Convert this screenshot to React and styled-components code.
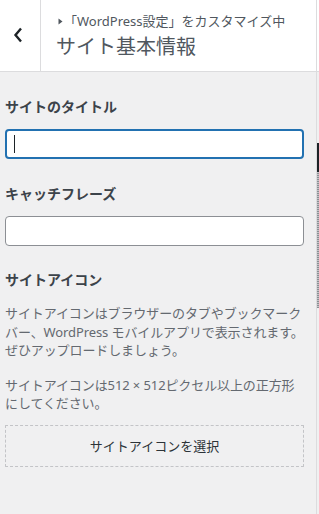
import React from "react";
import styled, { createGlobalStyle } from "styled-components";

const Global = createGlobalStyle`
  html, body { margin: 0; padding: 0; background: #f0f0f1; }
  body { font-family: "Noto Sans", "Noto Sans CJK JP", sans-serif; }
  * { box-sizing: border-box; }
`;

const Frame = styled.div`
  display: flex;
  width: 319px;
  height: 514px;
  overflow: hidden;
  background: #f0f0f1;
`;

const Panel = styled.div`
  width: 317px;
  flex: none;
  border-right: 1px solid #dcdcde;
  display: flex;
  flex-direction: column;
`;

const Header = styled.header`
  display: flex;
  height: 72px;
  background: #fff;
  border-bottom: 1px solid #dcdcde;
`;

const BackButton = styled.button`
  width: 41px;
  flex: none;
  border: 0;
  border-right: 1px solid #dcdcde;
  background: #fff;
  padding: 0;
  margin: 0;
  display: flex;
  align-items: center;
  justify-content: center;
  color: #1d2327;
  cursor: pointer;
  svg { margin-left: -5px; margin-top: -1px; }
`;

const TitleBlock = styled.div`
  display: flex;
  flex-direction: column;
  padding: 11px 0 0 15px;
`;

const Action = styled.div`
  display: flex;
  align-items: center;
  font-size: 13px;
  line-height: 20px;
  color: #50575e;
  white-space: nowrap;
  svg { margin: 0 1px 0 2px; }
`;

const SectionTitle = styled.h3`
  margin: 2px 0 0;
  font-size: 20px;
  line-height: 28px;
  font-weight: 400;
  color: #50575e;
`;

const Body = styled.div`
  display: flex;
  flex-direction: column;
  padding: 25px 12px 0 5px;
`;

const Field = styled.div`
  display: flex;
  flex-direction: column;
  margin-bottom: ${(p) => p.$mb || 0}px;
`;

const Label = styled.label`
  font-size: 14px;
  line-height: 20px;
  font-weight: 600;
  color: #3c434a;
  margin-bottom: ${(p) => p.$mb || 12}px;
`;

const InputWrap = styled.div`
  position: relative;
  height: 30px;
`;

const TextInput = styled.input`
  width: 100%;
  height: 30px;
  margin: 0;
  padding: 0 8px;
  font-family: inherit;
  font-size: 14px;
  background: #fff;
  border-radius: 4px;
  outline: none;
  caret-color: transparent;
  border: ${(p) => (p.$focused ? "2px solid #2271b1" : "1px solid #8c8f94")};
`;

const Caret = styled.span`
  position: absolute;
  left: 9px;
  top: 6px;
  width: 1px;
  height: 18px;
  background: #1d2327;
`;

const Desc = styled.p`
  margin: 0 0 ${(p) => p.$mb || 0}px;
  font-size: 13px;
  line-height: 18.5px;
  color: #646970;
  letter-spacing: -0.1px;
`;

const SelectButton = styled.button`
  width: 100%;
  height: 42px;
  margin: 0;
  border: 1px dashed #c3c4c7;
  border-radius: 1px;
  background: transparent;
  font-family: inherit;
  font-size: 13px;
  color: #2c3338;
  cursor: pointer;
`;

const Side = styled.div`
  width: 2px;
  flex: none;
  display: flex;
  flex-direction: column;
`;

const SideTop = styled.div`
  height: 72px;
  background: #fff;
  border-bottom: 1px solid #dcdcde;
`;

const SideGap = styled.div`
  height: 71px;
`;

const Thumb = styled.div`
  height: 29px;
  background: #1d2327;
`;

const Track = styled.div`
  height: 136px;
  background-color: #a7aaad;
  background-image: repeating-linear-gradient(0deg, #8c8f94 0 1px, #c3c4c7 1px 2px);
`;

function Chevron() {
  return (
    <svg width="10" height="16" viewBox="0 0 10 16" aria-hidden="true">
      <path d="M8 1.5 L2.5 8 L8 14.5" fill="none" stroke="currentColor" strokeWidth="2.4" />
    </svg>
  );
}

function Tri() {
  return (
    <svg width="5" height="7" viewBox="0 0 5 7" aria-hidden="true">
      <path d="M0.5 0.5 L4.5 3.5 L0.5 6.5 Z" fill="#50575e" />
    </svg>
  );
}

export default function App() {
  return (
    <>
      <Global />
      <Frame>
        <Panel>
          <Header>
            <BackButton aria-label="戻る">
              <Chevron />
            </BackButton>
            <TitleBlock>
              <Action>
                <Tri />
                「WordPress設定」をカスタマイズ中
              </Action>
              <SectionTitle>サイト基本情報</SectionTitle>
            </TitleBlock>
          </Header>
          <Body>
            <Field $mb={25}>
              <Label>サイトのタイトル</Label>
              <InputWrap>
                <TextInput $focused defaultValue="" />
                <Caret />
              </InputWrap>
            </Field>
            <Field $mb={24}>
              <Label>キャッチフレーズ</Label>
              <InputWrap>
                <TextInput defaultValue="" />
              </InputWrap>
            </Field>
            <Field>
              <Label $mb={14}>サイトアイコン</Label>
              <Desc $mb={16}>
                サイトアイコンはブラウザーのタブやブックマークバー、WordPress モバイルアプリで表示されます。ぜひアップロードしましょう。
              </Desc>
              <Desc $mb={12}>
                サイトアイコンは512 × 512ピクセル以上の正方形にしてください。
              </Desc>
              <SelectButton>サイトアイコンを選択</SelectButton>
            </Field>
          </Body>
        </Panel>
        <Side>
          <SideTop />
          <SideGap />
          <Thumb />
          <Track />
        </Side>
      </Frame>
    </>
  );
}
